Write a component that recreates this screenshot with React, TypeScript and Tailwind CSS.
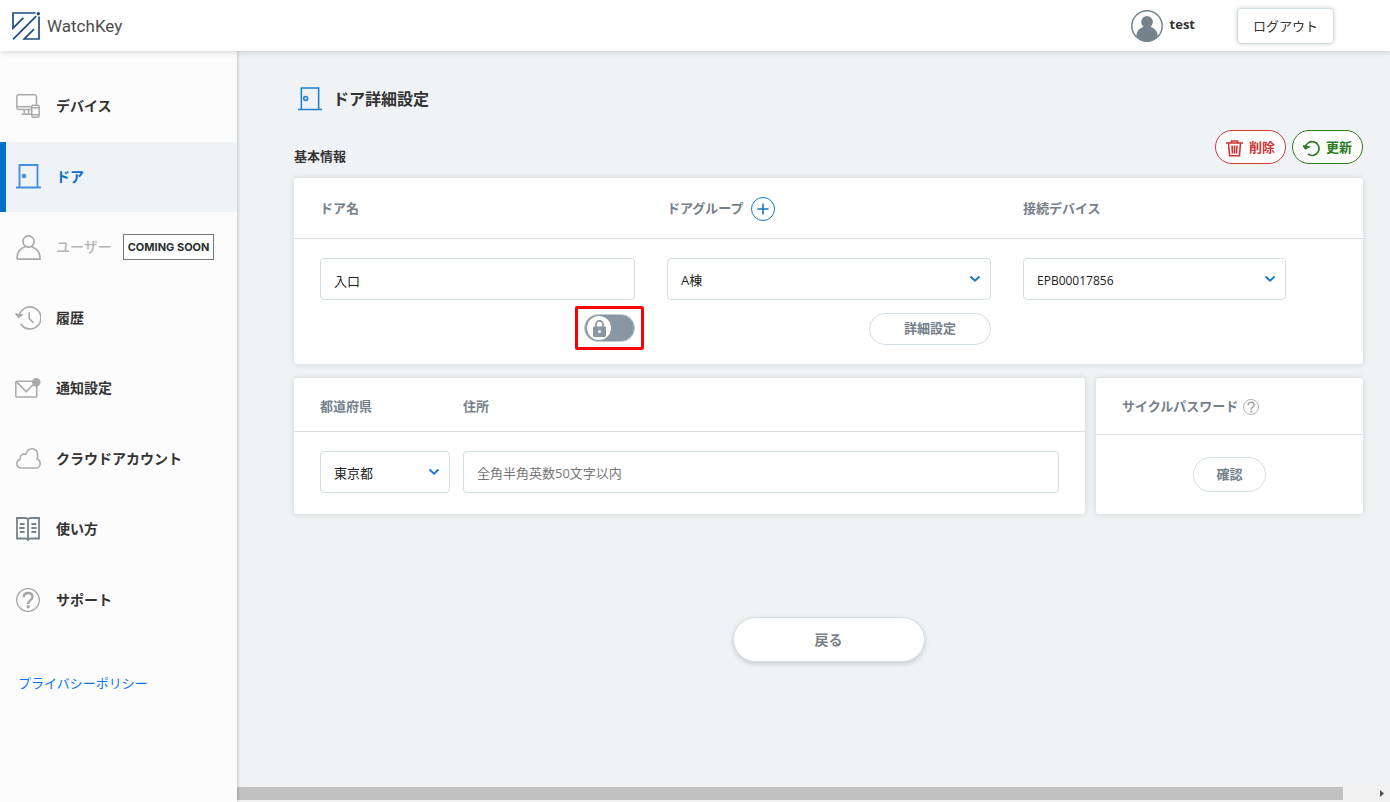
import React, { useState } from "react";

type IconProps = { className?: string };

function DeviceIcon() {
  return (
    <svg className="size-6" viewBox="0 0 24 24" fill="none" stroke="#a9a9a9" strokeWidth="1.5" aria-hidden="true">
      <path d="M15.5 15.4H2.6A2 2 0 0 1 .8 13.400V2.600A2 2 0 0 1 2.600.8h16A2 2 0 0 1 20.500 2.600V10.800" />
      <path d="M.8 12.700H15.500M8.200 15.500v4.300M12.600 15.500v4.300M5.500 20.300h10" />
      <rect x="15.700" y="11.200" width="7.500" height="12" rx="1.600" />
      <path d="M15.700 13.700h7.500M15.700 20.700h7.500" />
    </svg>
  );
}

function DoorIcon({ className, solid }: IconProps & { solid?: boolean }) {
  return (
    <svg className={className} viewBox="0 0 25 25" fill="none" stroke="currentColor" strokeWidth={solid ? "1.900" : "1.600"} aria-hidden="true">
      <path d="M3.500 23V1h18V23M0 23.500h25" />
      <circle cx="8" cy="12" r={solid ? "1.400" : "2"} fill={solid ? "currentColor" : "none"} />
    </svg>
  );
}

function UserIcon() {
  return (
    <svg className="size-[25px]" viewBox="0 0 25 25" fill="none" stroke="#a9a9a9" strokeWidth="1.600" aria-hidden="true">
      <circle cx="12.500" cy="6.500" r="5.600" />
      <path d="M.9 24.100c0-7.500 4.200-11.200 8.600-12.700M15.500 11.400c4.400 1.500 8.600 5.200 8.600 12.700H.9" />
    </svg>
  );
}

function HistoryIcon() {
  return (
    <svg className="size-[26px]" viewBox="0 0 26 26" fill="none" stroke="#a9a9a9" strokeWidth="1.600" aria-hidden="true">
      <path d="M4 11.500A11 11 0 1 1 5.600 18.800" />
      <path d="M.6 8.600 3.700 12.200 7.600 9.300" fill="#a9a9a9" />
      <path d="M14.200 7.200v6.400l4.300 4.200" />
    </svg>
  );
}

function MailIcon() {
  return (
    <svg className="h-5 w-[26px]" viewBox="0 0 26 20" fill="none" stroke="#a9a9a9" strokeWidth="1.500" aria-hidden="true">
      <rect x=".8" y="3.200" width="21" height="15.800" rx="1" />
      <path d="M1.200 3.600 11.200 13.600 19.500 5.500" />
      <circle cx="21.300" cy="4.200" r="4.200" fill="#a9a9a9" stroke="none" />
    </svg>
  );
}

function CloudIcon() {
  return (
    <svg className="h-[21px] w-[25px]" viewBox="0 0 25 21" fill="none" stroke="#a9a9a9" strokeWidth="1.500" aria-hidden="true">
      <path d="M5.200 20.100C2.600 20.100.8 18.200.8 15.800c0-2.300 1.400-4 3.400-4.400C3.600 8.400 5.300 6 7.800 5.900c.8 0 1.400.1 2 .5C10.900 2.800 13.100.8 16 .8c3.600 0 6 2.900 5.600 7.300-.1 1-.3 2-.6 2.700 2 .8 3.200 2.500 3.200 4.600 0 2.700-1.900 4.700-4.500 4.700z" />
    </svg>
  );
}

function BookIcon() {
  return (
    <svg className="size-6" viewBox="0 0 24 24" fill="none" stroke="#75828c" strokeWidth="1.800" aria-hidden="true">
      <path d="M12 2.200C11.200 1.300 10.400 1 9.200 1H1v20.500h8.200c1.500 0 2.300.3 2.800 1.500.5-1.200 1.300-1.500 2.800-1.500H23V1h-8.200c-1.200 0-2 .3-2.800 1.200zM12 2v21" />
      <path d="M4 7h4.600M3.200 11H8.600M4 15h4.600M15.400 7h4.800M15.400 11h5.200M15.400 15h4.800" />
    </svg>
  );
}

function HelpIcon({ className }: IconProps) {
  return (
    <svg className={className} viewBox="0 0 24 24" fill="none" stroke="#a6a6a6" aria-hidden="true">
      <circle cx="12" cy="12" r="11.300" strokeWidth="1.300" />
      <path d="M7.800 9.200C7.800 6.600 9.600 5 12.200 5s4.300 1.500 4.300 3.900c0 3.200-4.300 3.500-4.300 7" strokeWidth="2.300" />
      <circle cx="12.200" cy="18.800" r="1.700" fill="#a6a6a6" stroke="none" />
    </svg>
  );
}

function Chevron() {
  return (
    <svg className="pointer-events-none absolute right-[10px] top-[17px] h-2 w-3" viewBox="0 0 12 8" fill="none" stroke="#1878c8" strokeWidth="1.900" aria-hidden="true">
      <path d="M1.500 1.500 6 5.800l4.500-4.300" />
    </svg>
  );
}

function SelectBox({ id, value, small }: { id: string; value: string; small?: boolean }) {
  return (
    <div className="relative">
      <select
        id={id}
        className={
          "block h-[42px] w-full appearance-none rounded border border-[#d2dde4] bg-white px-[13px] pt-1 text-[#222] " +
          (small ? "text-xs" : "text-[13px]")
        }
      >
        <option>{value}</option>
      </select>
      <Chevron />
    </div>
  );
}

const NAV = [
  { label: "デバイス", icon: <DeviceIcon /> },
  { label: "ドア", icon: <DoorIcon solid className="size-[25px] text-[#4590e2]" />, active: true },
  { label: "ユーザー", icon: <UserIcon />, soon: true },
  { label: "履歴", icon: <HistoryIcon /> },
  { label: "通知設定", icon: <MailIcon /> },
  { label: "クラウドアカウント", icon: <CloudIcon /> },
  { label: "使い方", icon: <BookIcon /> },
  { label: "サポート", icon: <HelpIcon className="size-6" /> },
];

const CARD = "rounded-[3px] bg-white shadow-[0_0_6px_rgba(0,0,0,0.14)]";
const LABEL = "text-[13px] font-bold text-[#75808a]";
const FIELD = "block h-[42px] w-full rounded border border-[#d2dde4] bg-white px-[13px] pt-0.5 text-[13px] text-[#222] placeholder:text-[#757575]";
const PILL = "rounded-full border border-[#d2dde4] bg-white font-bold text-[#75808a]";
const ACTION = "flex h-[34px] w-[71px] items-center justify-center gap-[6px] rounded-full border bg-white pt-0.5 text-[13px] font-bold";
const COLS = "grid grid-cols-[315fr_324fr_263fr] gap-x-8 pl-[26px] pr-[77px]";

export default function App() {
  const [locked, setLocked] = useState(false);

  return (
    <div className="flex min-h-screen flex-col bg-[#eff3f6] font-['Open_Sans','Noto_Sans_CJK_JP',sans-serif] text-[#333]">
      <header className="relative z-20 flex h-[51px] items-center bg-white pl-3 pr-14 shadow-[0_1px_6px_rgba(0,0,0,0.16)]">
        <a href="#" className="flex items-center gap-[7px]">
          <svg className="size-7" viewBox="0 0 28 28" fill="none" stroke="#1d4b80" strokeWidth="1.700" aria-hidden="true">
            <path d="M23.500 1H1V16.200L11.400 5.800M27 4.500V27H12.200L22 17.200M1 27.400 24.200 4.200" />
            <circle cx="26.300" cy="1.700" r="1.700" fill="#1d4b80" stroke="none" />
          </svg>
          <span className="pt-0.5 font-['Roboto',sans-serif] text-[17px] text-[#4c4c4c]">WatchKey</span>
        </a>
        <div className="ml-auto flex items-center gap-[7px]">
          <svg className="size-8" viewBox="0 0 32 32" aria-hidden="true">
            <circle cx="16" cy="16" r="15.200" fill="#fff" stroke="#74828c" strokeWidth="1.500" />
            <ellipse cx="16" cy="12" rx="5.800" ry="6" fill="#74828c" />
            <path d="M5.300 26C5.500 20.500 9.500 17.600 13.500 16.500h5C22.500 17.600 26.500 20.500 26.700 26 24 29.500 20.500 31.500 16 31.500S8 29.500 5.300 26z" fill="#74828c" />
          </svg>
          <span className="pb-0.5 text-[13px] font-bold">test</span>
        </div>
        <button className="ml-[42px] h-9 w-[97px] rounded border border-[#d2dde4] bg-white pt-0.5 text-[13px] shadow-[0_0_4px_rgba(0,0,0,0.18)]">
          ログアウト
        </button>
      </header>

      <div className="flex flex-1">
        <aside className="relative z-10 w-[237px] shrink-0 bg-[#fcfcfc] pt-5 shadow-[1px_0_3px_rgba(0,0,0,0.18)]">
          <nav className="grid h-[564px] auto-rows-fr">
            {NAV.map((item) => (
              <a
                key={item.label}
                href="#"
                className={
                  "flex items-center border-l-[6px] pl-[9px] " +
                  (item.active ? "border-[#0070c4] bg-[#eff3f6]" : "border-transparent")
                }
              >
                <span className="flex w-[26px] shrink-0 justify-center">{item.icon}</span>
                <span
                  className={
                    "ml-[15px] text-sm " +
                    (item.soon ? "font-medium text-[#b5b5b5]" : item.active ? "font-bold text-[#0d6fc4]" : "font-bold text-[#333]")
                  }
                >
                  {item.label}
                </span>
                {item.soon && (
                  <span className="ml-[11px] whitespace-nowrap border border-[#6f7a78] bg-white px-1 font-['Inter',sans-serif] text-[11px] font-bold leading-6 text-[#26302e]">
                    COMING SOON
                  </span>
                )}
              </a>
            ))}
          </nav>
          <a href="#" className="ml-[18px] mt-[38px] inline-block text-[13px] leading-5 text-[#0d72f5]">
            プライバシーポリシー
          </a>
        </aside>

        <main className="flex min-w-0 flex-1 flex-col">
          <div className="flex flex-1 flex-col pl-[57px] pr-[27px] pt-8">
            <h1 className="flex h-8 items-center gap-[11px] pl-1 text-base font-bold">
              <DoorIcon className="size-6 text-[#1a7fd0]" />
              ドア詳細設定
            </h1>

            <div className="mt-[15px] flex h-[34px] items-center gap-1.5">
              <h2 className="mr-auto pt-5 text-[13px] font-bold">基本情報</h2>
              <button className={ACTION + " border-[#d23a3a] text-[#cf3535]"}>
                <svg className="size-[17px]" viewBox="0 0 17 17" fill="none" stroke="currentColor" strokeWidth="1.600" aria-hidden="true">
                  <path d="M0 3h17M5.500 3V1h6v2M2.500 3.200 3.600 15.800h9.800L14.500 3.200M6 5.500l.5 8M8.500 5.500v8M11 5.500l-.5 8" />
                </svg>
                削除
              </button>
              <button className={ACTION + " border-[#2f7d20] text-[#2a7a1c]"}>
                <svg className="size-[17px]" viewBox="0 0 18 18" fill="none" stroke="currentColor" strokeWidth="1.700" aria-hidden="true">
                  <path d="M2.400 8.500A7.300 7.300 0 1 1 5.200 14.800" />
                  <path d="M.6 6.200 2.500 9.100 6 7.400z" fill="currentColor" />
                </svg>
                更新
              </button>
            </div>

            <section className={CARD + " mt-[14px]"}>
              <div className={COLS + " h-[61px] items-center border-b border-[#dcdfe2] pt-0.5"}>
                <label htmlFor="door-name" className={LABEL}>ドア名</label>
                <div className="flex items-center gap-[7px]">
                  <label htmlFor="door-group" className={LABEL}>ドアグループ</label>
                  <button aria-label="ドアグループを追加" className="flex size-6 items-center justify-center rounded-full border border-[#1777c5] text-[#1777c5]">
                    <svg className="size-3" viewBox="0 0 12 12" stroke="currentColor" strokeWidth="1.600" aria-hidden="true">
                      <path d="M6 .5v11M.5 6h11" />
                    </svg>
                  </button>
                </div>
                <label htmlFor="device" className={LABEL}>接続デバイス</label>
              </div>
              <div className={COLS + " pb-[19px] pt-[19px]"}>
                <div className="flex flex-col">
                  <input id="door-name" className={FIELD} defaultValue="入口" />
                  <div className="relative mt-[14px] self-end">
                    <button
                      role="switch"
                      aria-checked={locked}
                      aria-label="施錠"
                      onClick={() => setLocked(!locked)}
                      className={
                        "flex h-7 w-[51px] items-center rounded-full border border-[#c3ccd3] bg-[#8997a2] px-[2px] " +
                        (locked ? "justify-end" : "justify-start")
                      }
                    >
                      <span className="flex size-6 items-center justify-center rounded-full bg-white">
                        <svg className="h-[17px] w-[13px]" viewBox="0 0 13 17" fill="none" aria-hidden="true">
                          <path d="M3 8V4.300a3.500 3.500 0 0 1 7 0V8" stroke="#8997a2" strokeWidth="1.700" />
                          <rect y="6.500" width="13" height="10.500" rx="1.200" fill="#8997a2" />
                          <circle cx="6.500" cy="11.500" r="1.500" fill="#fff" />
                        </svg>
                      </span>
                    </button>
                    <span className="pointer-events-none absolute -inset-x-[9px] -inset-y-2 rounded-xs border-[3px] border-[#ff0000]" />
                  </div>
                </div>
                <div className="flex flex-col">
                  <SelectBox id="door-group" value="A棟" />
                  <button className={PILL + " mt-[13px] h-8 w-[122px] self-end text-[13px]"}>詳細設定</button>
                </div>
                <SelectBox id="device" value="EPB00017856" small />
              </div>
            </section>

            <div className="mt-[14px] grid grid-cols-[791fr_267fr] gap-x-[11px]">
              <section className={CARD}>
                <div className="grid h-[54px] grid-cols-[130px_1fr] items-center gap-x-[13px] border-b border-[#dcdfe2] px-[26px] pt-1">
                  <label htmlFor="prefecture" className={LABEL}>都道府県</label>
                  <label htmlFor="address" className={LABEL}>住所</label>
                </div>
                <div className="grid grid-cols-[130px_1fr] gap-x-[13px] px-[26px] pb-[21px] pt-[19px]">
                  <SelectBox id="prefecture" value="東京都" />
                  <input id="address" className={FIELD} placeholder="全角半角英数50文字以内" />
                </div>
              </section>
              <section className={CARD}>
                <div className="flex h-[57px] items-center gap-[5px] border-b border-[#dcdfe2] pl-[26px] pt-0.5">
                  <h3 className={LABEL}>サイクルパスワード</h3>
                  <button aria-label="ヘルプ"><HelpIcon className="size-4" /></button>
                </div>
                <div className="flex justify-center pt-[22px]">
                  <button className={PILL + " h-[35px] w-[73px] text-[13px]"}>確認</button>
                </div>
              </section>
            </div>

            <button className={PILL + " mb-10 mt-[103px] h-[45px] w-[192px] self-center text-sm shadow-[0_2px_5px_rgba(0,0,0,0.16)]"}>
              戻る
            </button>
          </div>

          <div className="flex h-[17px] items-center bg-[#f1f1f1]" aria-hidden="true">
            <div className="h-[13px] flex-1 bg-[#c1c1c1]" />
            <div className="flex w-[47px] justify-end pr-[6px]">
              <svg className="h-[7px] w-1" viewBox="0 0 4 7" fill="#505050"><path d="M0 0 4 3.500 0 7z" /></svg>
            </div>
          </div>
        </main>
      </div>
    </div>
  );
}
